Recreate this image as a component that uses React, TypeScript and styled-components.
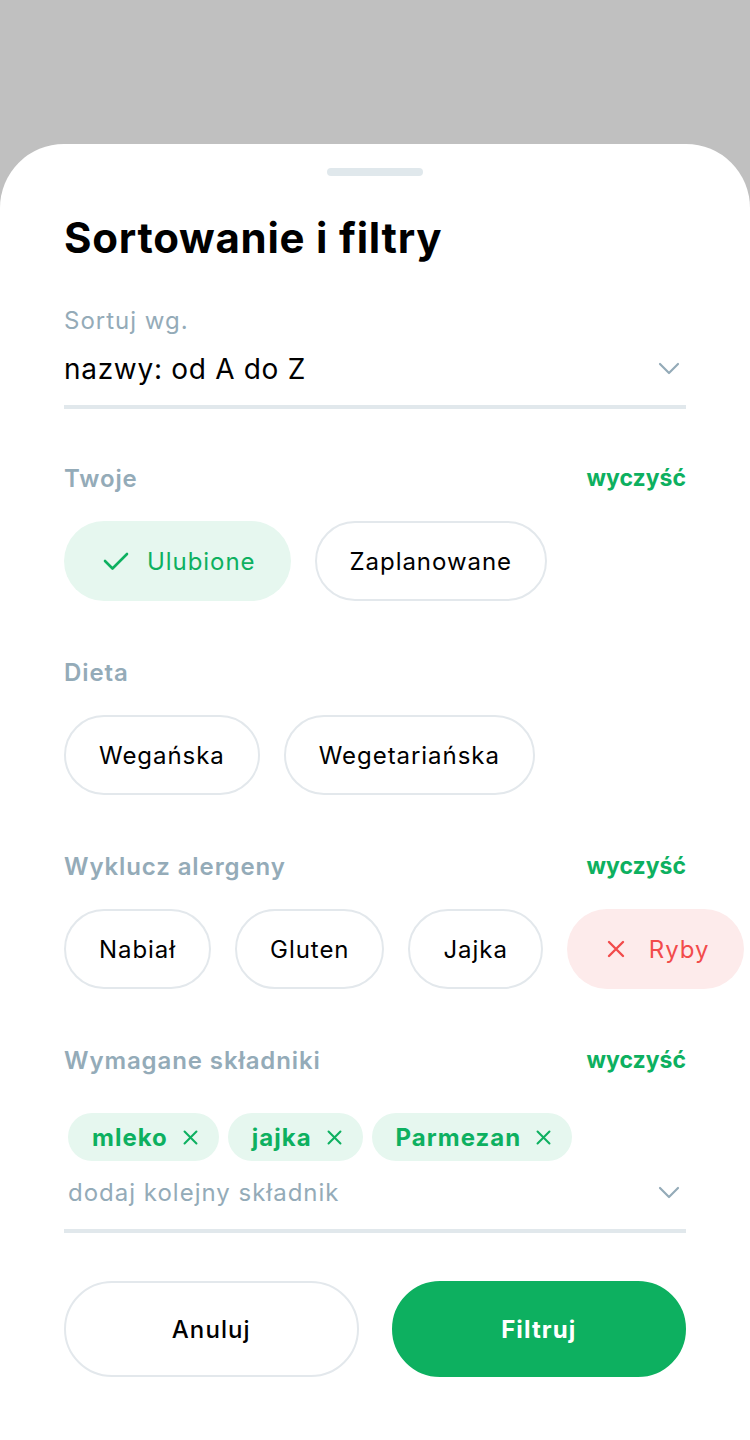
import React from 'react';
import styled, { createGlobalStyle } from 'styled-components';

const GlobalStyle = createGlobalStyle`
    html, body {
        margin: 0;
        padding: 0;
        background: #c0c0c0;
    }
    body {
        font-family: Inter, 'Noto Sans', sans-serif;
    }
`;

const green = '#0db060';
const grey = '#94abb8';
const line = '#e1e8ec';

const StyledPage = styled.div`
    width: 750px;
    height: 1440px;
    background: #c0c0c0;
    padding-top: 144px;
    box-sizing: border-box;
    overflow: hidden;
`;

const StyledSheet = styled.div`
    background: #fff;
    height: 1296px;
    border-radius: 64px 64px 0 0;
    padding: 24px 64px 0;
    box-sizing: border-box;
    display: flex;
    flex-direction: column;
`;

const StyledHandle = styled.div`
    width: 96px;
    height: 8px;
    border-radius: 4px;
    background: #e0e8ec;
    align-self: center;
`;

const StyledTitle = styled.h1`
    margin: 36px 0 0;
    font-size: 42px;
    line-height: 52px;
    font-weight: 700;
    color: #000;
    letter-spacing: 0.75px;
`;

const StyledSelect = styled.div<{ $mt: number }>`
    margin-top: ${({ $mt }) => $mt}px;
    border-bottom: 4px solid ${line};
    display: flex;
    flex-direction: column;
`;

const StyledSelectLabel = styled.div`
    font-size: 24px;
    line-height: 30px;
    letter-spacing: 1px;
    color: ${grey};
    margin-bottom: 13px;
`;

const StyledSelectRow = styled.div<{ $pt: number; $pb: number }>`
    display: flex;
    align-items: center;
    justify-content: space-between;
    padding: ${({ $pt, $pb }) => `${$pt}px 0 ${$pb}px`};
`;

const StyledSelectValue = styled.div<{ $placeholder?: boolean }>`
    font-size: ${({ $placeholder }) => ($placeholder ? 24 : 28)}px;
    letter-spacing: ${({ $placeholder }) => ($placeholder ? 1 : 0.7)}px;
    line-height: 40px;
    color: ${({ $placeholder }) => ($placeholder ? grey : '#000')};
    padding-left: ${({ $placeholder }) => ($placeholder ? 4 : 0)}px;
`;

const StyledSection = styled.div<{ $mt: number }>`
    margin-top: ${({ $mt }) => $mt}px;
`;

const StyledSectionHead = styled.div`
    display: flex;
    justify-content: space-between;
    align-items: center;
    height: 34px;
`;

const StyledSectionLabel = styled.div`
    font-size: 24px;
    font-weight: 600;
    letter-spacing: 0.9px;
    color: ${grey};
`;

const StyledClear = styled.div`
    font-size: 23px;
    font-weight: 700;
    color: ${green};
`;

const StyledChips = styled.div`
    display: flex;
    gap: 24px;
    margin-top: 26px;
`;

type Tone = 'plain' | 'on' | 'off';

const StyledChip = styled.div<{ $tone: Tone }>`
    height: 80px;
    box-sizing: border-box;
    border-radius: 40px;
    padding: 0 33px 0 ${({ $tone }) => ($tone === 'plain' ? 33 : 37)}px;
    display: flex;
    align-items: center;
    gap: ${({ $tone }) => ($tone === 'off' ? 23 : 18)}px;
    flex-shrink: 0;
    font-size: 24px;
    letter-spacing: 0.95px;
    color: ${({ $tone }) =>
        $tone === 'on' ? green : $tone === 'off' ? '#f24b4b' : '#000'};
    background: ${({ $tone }) =>
        $tone === 'on' ? '#e6f7ef' : $tone === 'off' ? '#fdebeb' : '#fff'};
    border: 2px solid
        ${({ $tone }) => ($tone === 'plain' ? '#e3e8ec' : 'transparent')};
`;

const StyledTags = styled.div`
    display: flex;
    gap: 9px;
    margin-top: 36px;
    padding-left: 4px;
`;

const StyledTag = styled.div`
    height: 48px;
    border-radius: 24px;
    background: #e6f7ef;
    color: ${green};
    font-size: 24px;
    font-weight: 700;
    letter-spacing: 1px;
    display: flex;
    align-items: center;
    gap: 14px;
    padding: 0 20px 0 24px;
`;

const StyledButtons = styled.div`
    display: grid;
    grid-template-columns: 1fr 1fr;
    gap: 33px;
    margin-top: 48px;
`;

const StyledButton = styled.div<{ $primary?: boolean }>`
    height: 96px;
    box-sizing: border-box;
    border-radius: 48px;
    display: flex;
    align-items: center;
    justify-content: center;
    font-size: 24px;
    letter-spacing: 1.1px;
    font-weight: ${({ $primary }) => ($primary ? 700 : 500)};
    color: ${({ $primary }) => ($primary ? '#fff' : '#000')};
    background: ${({ $primary }) => ($primary ? green : '#fff')};
    border: 2px solid ${({ $primary }) => ($primary ? green : '#e3e8ec')};
`;

const Chevron = () => (
    <svg width="22" height="14" viewBox="0 0 22 14" style={{ marginRight: 6 }}>
        <path
            d="M2 2 L11 11 L20 2"
            fill="none"
            stroke={grey}
            strokeWidth="2.2"
            strokeLinecap="round"
            strokeLinejoin="round"
        />
    </svg>
);

const Check = () => (
    <svg width="26" height="20" viewBox="0 0 26 20">
        <path
            d="M2 10 L9.5 17.5 L24 3"
            fill="none"
            stroke={green}
            strokeWidth="2.6"
            strokeLinecap="round"
            strokeLinejoin="round"
        />
    </svg>
);

const Cross = ({ color, size }: { color: string; size: number }) => (
    <svg width={size} height={size} viewBox="0 0 20 20">
        <path
            d="M3 3 L17 17 M17 3 L3 17"
            fill="none"
            stroke={color}
            strokeWidth="2.4"
            strokeLinecap="round"
        />
    </svg>
);

const App: React.FC = () => {
    return (
        <StyledPage>
            <GlobalStyle />
            <StyledSheet>
                <StyledHandle />
                <StyledTitle>Sortowanie i filtry</StyledTitle>

                <StyledSelect $mt={42}>
                    <StyledSelectLabel>Sortuj wg.</StyledSelectLabel>
                    <StyledSelectRow $pt={0} $pb={16}>
                        <StyledSelectValue>nazwy: od A do Z</StyledSelectValue>
                        <Chevron />
                    </StyledSelectRow>
                </StyledSelect>

                <StyledSection $mt={52}>
                    <StyledSectionHead>
                        <StyledSectionLabel>Twoje</StyledSectionLabel>
                        <StyledClear>wyczyść</StyledClear>
                    </StyledSectionHead>
                    <StyledChips>
                        <StyledChip $tone="on">
                            <Check />
                            Ulubione
                        </StyledChip>
                        <StyledChip $tone="plain">Zaplanowane</StyledChip>
                    </StyledChips>
                </StyledSection>

                <StyledSection $mt={54}>
                    <StyledSectionHead>
                        <StyledSectionLabel>Dieta</StyledSectionLabel>
                    </StyledSectionHead>
                    <StyledChips>
                        <StyledChip $tone="plain">Wegańska</StyledChip>
                        <StyledChip $tone="plain">Wegetariańska</StyledChip>
                    </StyledChips>
                </StyledSection>

                <StyledSection $mt={54}>
                    <StyledSectionHead>
                        <StyledSectionLabel>Wyklucz alergeny</StyledSectionLabel>
                        <StyledClear>wyczyść</StyledClear>
                    </StyledSectionHead>
                    <StyledChips>
                        <StyledChip $tone="plain">Nabiał</StyledChip>
                        <StyledChip $tone="plain">Gluten</StyledChip>
                        <StyledChip $tone="plain">Jajka</StyledChip>
                        <StyledChip $tone="off">
                            <Cross color="#f24b4b" size={20} />
                            Ryby
                        </StyledChip>
                    </StyledChips>
                </StyledSection>

                <StyledSection $mt={54}>
                    <StyledSectionHead>
                        <StyledSectionLabel>Wymagane składniki</StyledSectionLabel>
                        <StyledClear>wyczyść</StyledClear>
                    </StyledSectionHead>
                    <StyledSelect $mt={0}>
                        <StyledTags>
                            {['mleko', 'jajka', 'Parmezan'].map((t) => (
                                <StyledTag key={t}>
                                    {t}
                                    <Cross color={green} size={17} />
                                </StyledTag>
                            ))}
                        </StyledTags>
                        <StyledSelectRow $pt={12} $pb={16}>
                            <StyledSelectValue $placeholder>
                                dodaj kolejny składnik
                            </StyledSelectValue>
                            <Chevron />
                        </StyledSelectRow>
                    </StyledSelect>
                </StyledSection>

                <StyledButtons>
                    <StyledButton>Anuluj</StyledButton>
                    <StyledButton $primary>Filtruj</StyledButton>
                </StyledButtons>
            </StyledSheet>
        </StyledPage>
    );
};

export default App;
